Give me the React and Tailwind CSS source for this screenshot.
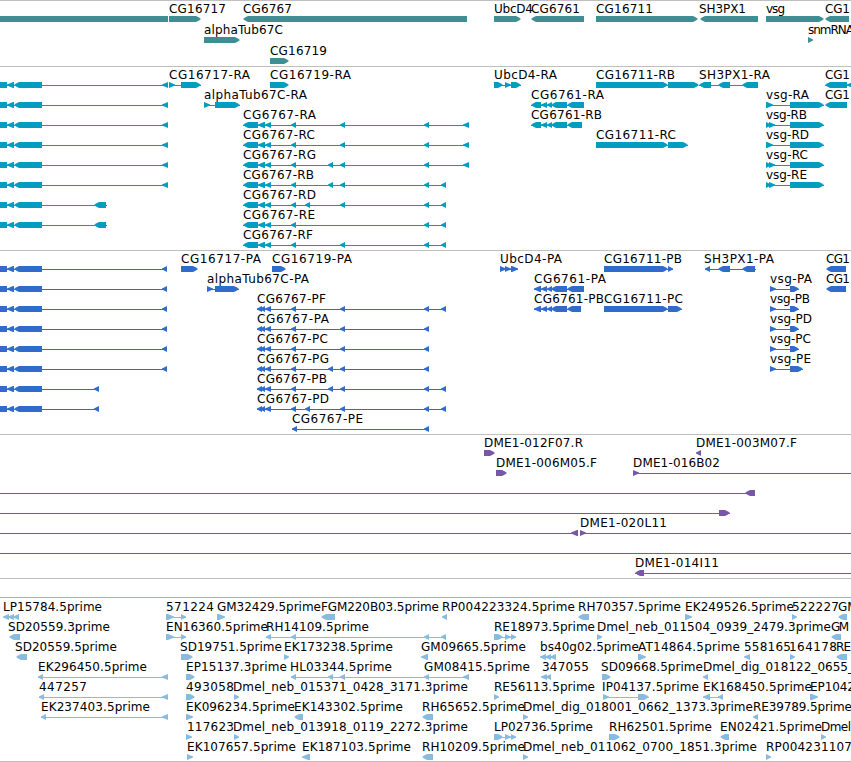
import React from "react";

const L = "L";
const R = "R";

// lines are [x1, x2]; exons are [x1, x2, direction], flat-ended without one.
const toShapes = (lines, exons) => ({ lines, exons });

const leftModel = (kind) =>
  kind === "long"
    ? [[0, 7], [7, 14, L], [14, 42, L], [162, 168, L]]
    : [[0, 7], [7, 14, L], [14, 42, L], [94, 106, L]];

const RT = {
  a: [291, 296, L],
  b: [305, 310, L],
  c: [328, 333, L],
  d: [340, 345, L],
  e: [424, 429, L],
  f: [441, 446, L],
  g: [463, 469, L],
};
const pick = (keys) => keys.split("").map((k) => RT[k]);
const rHead = [[243, 258, L], [258, 265, L], [265, 271, L]];
const pHead = [[257, 262, L], [260, 265, L], [265, 271, L]];
const cg6761 = (start, end) => [[start, 541, L], [541, 547, L], [547, 552, L], [551, 567, L], [567, end, L]];
const vsgSingle = [[766, 773, R], [790, 824, R]];
const vsgDouble = [[766, 771, R], [769, 775, R], [790, 824, R]];
const ubc = [[494, 503, R], [505, 511, R], [511, 516, R]];

// Labels are [text, x, right edge]; without a right edge they use natural spacing.
const genes = [
  {
    ...toShapes([], [[0, 168], [169, 201, R], [243, 467, L], [494, 521, R], [531, 584, L], [596, 698, R], [700, 758, L], [766, 824, R], [825, 849, L]]),
    labels: [["CG16717", 169, 226], ["CG6767", 243, 292], ["UbcD4", 494, 533], ["CG6761", 531, 580], ["CG16711", 596, 653], ["SH3PX1", 699, 746], ["vsg", 766, 785], ["CG1", 825, 850]],
  },
  { ...toShapes([], [[204, 240, R], [808, 813, R]]), labels: [["alphaTub67C", 204, 283], ["snmRNA", 808, 854]] },
  { ...toShapes([], [[270, 289, R]]), labels: [["CG16719", 270, 327]] },
];

const transcripts = [
  {
    ...toShapes(
      [[0, 168], [169, 201], [494, 521], [596, 698], [699, 758], [825, 851]],
      [...leftModel("long"), [169, 175, R], [181, 201, R], [270, 289, R], [494, 503, R], [505, 511, R], [511, 521, R], [596, 668, R], [668, 699, R], [699, 711, L], [718, 730, L], [742, 758, L], [825, 847, L], [847, 855, L]],
    ),
    labels: [["CG16717-RA", 169, 250], ["CG16719-RA", 270, 351], ["UbcD4-RA", 494, 557], ["CG16711-RB", 596, 675], ["SH3PX1-RA", 699, 770], ["CG1", 825, 850]],
  },
  {
    ...toShapes([[0, 168], [204, 240], [531, 584], [766, 824]], [...leftModel("long"), [204, 210, R], [215, 240, R], ...cg6761(531, 584), ...vsgSingle, [825, 847, L]]),
    labels: [["alphaTub67C-RA", 204, 307], ["CG6761-RA", 531, 604], ["vsg-RA", 766, 809], ["CG1", 825, 850]],
  },
  {
    ...toShapes([[0, 168], [243, 469], [531, 582], [766, 824]], [...leftModel("long"), ...rHead, ...pick("adeg"), ...cg6761(531, 582), ...vsgDouble]),
    labels: [["CG6767-RA", 243, 316], ["CG6761-RB", 531, 602], ["vsg-RB", 766, 807]],
  },
  {
    ...toShapes([[0, 168], [243, 469], [596, 688], [766, 824]], [...leftModel("long"), ...rHead, ...pick("adeg"), [596, 668, R], [668, 688, R], ...vsgSingle]),
    labels: [["CG6767-RC", 243, 315], ["CG16711-RC", 596, 676], ["vsg-RD", 766, 809]],
  },
  {
    ...toShapes([[0, 168], [243, 469], [766, 824]], [...leftModel("long"), ...rHead, ...pick("acdeg"), ...vsgDouble]),
    labels: [["CG6767-RG", 243, 316], ["vsg-RC", 766, 808]],
  },
  {
    ...toShapes([[0, 168], [243, 446], [766, 824]], [...leftModel("long"), ...rHead, ...pick("acdef"), ...vsgDouble]),
    labels: [["CG6767-RB", 243, 314], ["vsg-RE", 766, 807]],
  },
  { ...toShapes([[0, 107], [243, 446]], [...leftModel("short"), ...rHead, ...pick("abdef")]), labels: [["CG6767-RD", 243, 316]] },
  { ...toShapes([[0, 107], [243, 446]], [...leftModel("short"), ...rHead, ...pick("aef")]), labels: [["CG6767-RE", 243, 315]] },
  { ...toShapes([[243, 446]], [...rHead, ...pick("adef")]), labels: [["CG6767-RF", 243, 313]] },
];

const pLeft = [[0, 7], [7, 14, L], [14, 42, L], [162, 167, L]];
const pLeftShort = [[0, 7], [7, 14, L], [14, 42, L], [94, 99, L]];
const vsgP = [[770, 776, R], [790, 799, R]];

const proteins = [
  {
    ...toShapes(
      [[0, 167], [500, 518], [604, 673], [705, 756]],
      [...pLeft, [181, 198, R], [272, 286, R], [500, 506, R], [505, 511, R], [511, 518, R], [604, 668, R], [668, 673, R], [705, 710, L], [718, 730, L], [742, 755, L], [826, 846, L]],
    ),
    labels: [["CG16717-PA", 181, 261], ["CG16719-PA", 272, 352], ["UbcD4-PA", 500, 562], ["CG16711-PB", 604, 682], ["SH3PX1-PA", 704, 774], ["CG1", 826, 850]],
  },
  {
    ...toShapes([[0, 167], [207, 239], [534, 584], [770, 799]], [...pLeft, [207, 213, R], [215, 239, R], ...cg6761(534, 584), ...vsgP, [826, 846, L]]),
    labels: [["alphaTub67C-PA", 207, 309], ["CG6761-PA", 534, 606], ["vsg-PA", 770, 812], ["CG1", 826, 850]],
  },
  {
    ...toShapes([[0, 167], [257, 446], [534, 581], [604, 682], [770, 799]], [...pLeft, ...pHead, ...pick("adef"), ...cg6761(534, 581), [604, 668, R], [668, 682, R], ...vsgP]),
    labels: [["CG6767-PF", 257, 326], ["CG6761-PB", 534, 604], ["CG16711-PC", 604, 683], ["vsg-PB", 770, 810]],
  },
  { ...toShapes([[0, 167], [257, 429], [770, 799]], [...pLeft, ...pHead, ...pick("ade"), ...vsgP]), labels: [["CG6767-PA", 257, 329], ["vsg-PD", 770, 812]] },
  { ...toShapes([[0, 167], [257, 429], [770, 799]], [...pLeft, ...pHead, ...pick("ade"), ...vsgP]), labels: [["CG6767-PC", 257, 328], ["vsg-PC", 770, 811]] },
  { ...toShapes([[0, 167], [257, 429], [770, 803]], [...pLeft, ...pHead, ...pick("acde"), [770, 776, R], [790, 803, R]]), labels: [["CG6767-PG", 257, 329], ["vsg-PE", 770, 811]] },
  { ...toShapes([[0, 99], [257, 446]], [...pLeftShort, ...pHead, ...pick("acdef")]), labels: [["CG6767-PB", 257, 327]] },
  { ...toShapes([[0, 99], [257, 446]], [...pLeftShort, ...pHead, ...pick("abdef")]), labels: [["CG6767-PD", 257, 329]] },
  { ...toShapes([[292, 429]], [[292, 297, L], RT.e]), labels: [["CG6767-PE", 292, 363]] },
];

const clones = [
  { ...toShapes([], [[484, 495, R], [696, 701, L]]), labels: [["DME1-012F07.R", 484, 583], ["DME1-003M07.F", 696, 797]] },
  { ...toShapes([[633, 851]], [[496, 507, R], [633, 639, R]]), labels: [["DME1-006M05.F", 496, 597], ["DME1-016B02", 633, 720]] },
  { ...toShapes([[0, 755]], [[745, 755, L]]), labels: [] },
  { ...toShapes([[0, 730]], [[719, 730, R]]), labels: [] },
  { ...toShapes([[0, 578], [580, 851]], [[571, 578, L], [580, 586, R]]), labels: [["DME1-020L11", 580, 667]] },
  { ...toShapes([[0, 851]], []), labels: [] },
  { ...toShapes([[635, 851]], [[635, 644, L]]), labels: [["DME1-014I11", 635, 719]] },
];

const ests = [
  {
    ...toShapes([[166, 186]], [[3, 9, L], [8, 14, L], [13, 19, L], [166, 174, R], [181, 186, R], [217, 225, R], [321, 335, L], [442, 447, L], [578, 589, L], [685, 692, R], [792, 797, R], [838, 847, L]]),
    labels: [["LP15784.5prime", 3, 102], ["571224", 166, 214], ["GM32429.5prime", 217, 321], ["FGM220B03.5prime", 321, 439], ["RP004223324.5prime", 442, 575], ["RH70357.5prime", 578, 681], ["EK249526.5prime", 685, 794], ["522227", 792, 839], ["GM", 838]],
  },
  {
    ...toShapes([[166, 186], [266, 446], [494, 516]], [[9, 20, L], [166, 174, R], [181, 186, R], [266, 271, L], ...pick("aef"), ...ubc, [597, 602, R], [831, 841, L]]),
    labels: [["SD20559.3prime", 8, 110], ["EN16360.5prime", 166, 268], ["RH14109.5prime", 266, 369], ["RE18973.5prime", 494, 595], ["Dmel_neb_011504_0939_2479.3prime", 597, 831], ["GM", 831, 849]],
  },
  {
    ...toShapes([], [[16, 27, L], [181, 193, R], [284, 289, R], [421, 428, L], [540, 546, L], [545, 551, L], [550, 556, L], [638, 646, R], [744, 750, L], [790, 795, R], [836, 847, L]]),
    labels: [["SD20559.5prime", 15, 117], ["SD19751.5prime", 180, 282], ["EK173238.5prime", 284, 393], ["GM09665.5prime", 421, 526], ["bs40g02.5prime", 540, 639], ["AT14864.5prime", 638, 740], ["558165", 744, 791], ["164178", 789, 837], ["RE", 836, 851]],
  },
  {
    ...toShapes([[38, 168], [291, 469]], [[38, 43, L], [162, 168, L], [186, 195, R], ...pick("acdeg"), [541, 547, L], [546, 551, L], [602, 611, R], [703, 708, L]]),
    labels: [["EK296450.5prime", 38, 147], ["EP15137.3prime", 186, 287], ["HL03344.5prime", 290, 392], ["GM08415.5prime", 424, 530], ["347055", 542, 589], ["SD09668.5prime", 601, 703], ["Dmel_dig_018122_0655_", 703, 854]],
  },
  {
    ...toShapes([[39, 168], [603, 649], [703, 723]], [[39, 44, L], [162, 168, L], [186, 195, R], [234, 239, R], [494, 499, R], [603, 609, R], [638, 649, R], [703, 710, L], [718, 723, L], [810, 818, R]]),
    labels: [["447257", 39, 87], ["493058", 186, 234], ["Dmel_neb_015371_0428_3171.3prime", 233, 468], ["RE56113.5prime", 494, 595], ["IP04137.5prime", 602, 699], ["EK168450.5prime", 703, 812], ["EP1042", 810, 855]],
  },
  {
    ...toShapes([[41, 168]], [[41, 46, L], [162, 168, L], [186, 193, R], [294, 303, L], [422, 433, L], [523, 528, R], [753, 758, L]]),
    labels: [["EK237403.5prime", 41, 150], ["EK096234.5prime", 186, 295], ["EK143302.5prime", 294, 403], ["RH65652.5prime", 422, 525], ["Dmel_dig_018001_0662_1373.3prime", 523, 753], ["RE39789.5prime", 753, 852]],
  },
  {
    ...toShapes([[494, 516]], [[186, 192, R], [234, 239, R], ...ubc, [609, 620, R], [720, 729, L], [821, 826, R]]),
    labels: [["117623", 187, 234], ["Dmel_neb_013918_0119_2272.3prime", 233, 468], ["LP02736.5prime", 494, 593], ["RH62501.5prime", 609, 712], ["EN02421.5prime", 720, 822], ["Dmel", 821, 851]],
  },
  {
    ...toShapes([], [[187, 193, R], [302, 310, L], [422, 433, L], [523, 528, R], [766, 771, R]]),
    labels: [["EK107657.5prime", 187, 296], ["EK187103.5prime", 302, 411], ["RH10209.5prime", 422, 525], ["Dmel_neb_011062_0700_1851.3prime", 523, 757], ["RP004231107", 766, 852]],
  },
];

function Exon({ x1, x2, dir, y }) {
  if (!dir) return <rect x={x1} y={y} width={x2 - x1} height="6" />;
  const tail = dir === R ? x1 : x2;
  const tip = dir === R ? x2 : x1;
  const s = dir === R ? -1 : 1;
  const wide = x2 - x1 > 8;
  const h = Math.min(6, x2 - x1);
  // Wide bars get a rounded-off head, short ones a plain triangle.
  const head = wide
    ? `${tip + s * 5},${y} ${tip + s * 2.5},${y + 1.2} ${tip},${y + 3} ${tip + s * 2.5},${y + 4.8} ${tip + s * 5},${y + 6}`
    : `${tip + s * h},${y} ${tip},${y + 2.6} ${tip},${y + 3.4} ${tip + s * h},${y + 6}`;
  return <polygon points={`${tail},${y} ${head} ${tail},${y + 6}`} />;
}

function Track({ rows, height, color, first = 15, pitch = 20, border = "border-[#bfbfbf]" }) {
  return (
    <section className={`w-full shrink-0 overflow-hidden border-t ${border}`}>
      <svg width="851" height={height - 1} className="block overflow-hidden">
        {rows.map((row, i) => {
          const y = first + i * pitch;
          return (
            <g key={i}>
              <g fill={color} shapeRendering="crispEdges">
                {row.lines.map(([a, b], k) => (
                  <rect key={k} x={a} y={y + 3} width={b - a} height="1" />
                ))}
              </g>
              <g fill={color}>
                {row.exons.map(([a, b, d], k) => (
                  <Exon key={k} x1={a} x2={b} dir={d} y={y} />
                ))}
              </g>
              <g fill="#000" className="font-['DejaVu_Sans',sans-serif] text-[12px]">
                {row.labels.map(([text, x, end]) =>
                  end ? (
                    <text key={text} x={x} y={y - 3} textLength={end - x}>{text}</text>
                  ) : (
                    <text key={text} x={x} y={y - 3}>{text}</text>
                  ),
                )}
              </g>
            </g>
          );
        })}
      </svg>
    </section>
  );
}

export default function App() {
  return (
    <main className="flex h-[762px] w-[851px] flex-col overflow-hidden bg-white">
      <Track rows={genes} height={66} color="#3f8e94" pitch={21} />
      <Track rows={transcripts} height={184} color="#009dbf" />
      <Track rows={proteins} height={184} color="#316bcb" />
      <Track rows={clones} height={144} color="#7757a6" />
      <div className="h-[19px] shrink-0 border-t border-[#bfbfbf]" />
      <Track rows={ests} height={164} color="#88bbdd" first={16} border="border-[#88bbdd]" />
      <div className="h-px shrink-0 bg-[#bfbfbf]" />
    </main>
  );
}
